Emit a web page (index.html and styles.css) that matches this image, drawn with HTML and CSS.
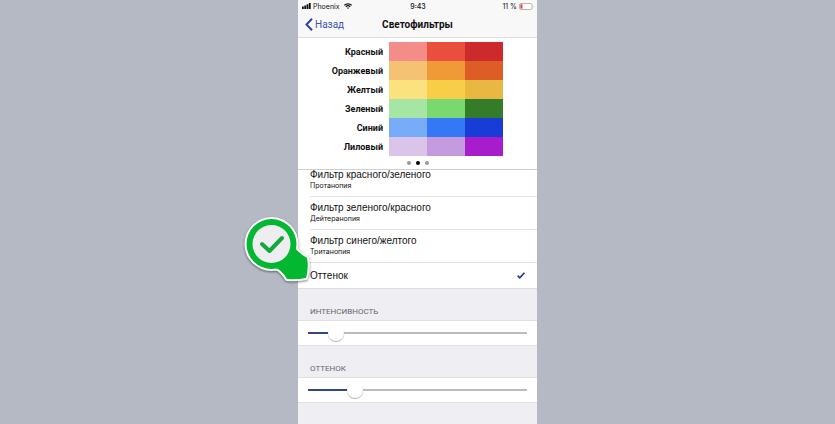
FILE: index.html
```
<!DOCTYPE html>
<html lang="ru">
<head>
    <meta charset="utf-8">
    <title>Светофильтры</title>
    <link rel="stylesheet" href="styles.css">
</head>
<body>
    <main class="phone">
        <header class="header">
            <div class="status">
                <div class="carrier">
                    <svg width="9" height="6" viewBox="0 0 9 6">
                        <path d="M0 3.500h1.800V6H0zM2.300 2.500h1.800V6H2.300zM4.600 1.200h1.800V6H4.600zM6.900 0h1.800v6H6.900z" fill="#111"/>
                    </svg>
                    <span>Phoenix</span>
                    <svg width="8" height="6" viewBox="0 0 8 6" fill="none" stroke="#111" stroke-width="1.200">
                        <path d="M.4 2.300C2.400.3 5.600.3 7.600 2.300M1.800 3.700c1.300-1.200 3.100-1.200 4.400 0"/>
                        <path d="M4 6L2.900 4.800q1.100-.8 2.200 0z" fill="#111" stroke="none"/>
                    </svg>
                </div>
                <span class="time">9:43</span>
                <div class="battery">
                    <span>11 %</span>
                    <svg width="15" height="7" viewBox="0 0 15 7">
                        <rect x=".5" y=".5" width="12.500" height="6" rx="1.500" fill="#fff" stroke="#b99a9c" stroke-width=".8"/>
                        <rect x="1.400" y="1.400" width="2" height="4.200" fill="#e0383e"/>
                        <path d="M14 2.500q1 1 0 2z" fill="#b99a9c"/>
                    </svg>
                </div>
            </div>
            <nav class="nav">
                <a class="back" href="#">
                    <svg width="8" height="13" viewBox="0 0 8 13" fill="none" stroke="#2c459f" stroke-width="2">
                        <path d="M7 .8L1.500 6.500 7 12.200"/>
                    </svg>
                    Назад
                </a>
                <h1>Светофильтры</h1>
            </nav>
        </header>

        <section class="preview">
            <table class="colors">
                <tr><th scope="row">Красный</th><td class="red-1"></td><td class="red-2"></td><td class="red-3"></td></tr>
                <tr><th scope="row">Оранжевый</th><td class="orange-1"></td><td class="orange-2"></td><td class="orange-3"></td></tr>
                <tr><th scope="row">Желтый</th><td class="yellow-1"></td><td class="yellow-2"></td><td class="yellow-3"></td></tr>
                <tr><th scope="row">Зеленый</th><td class="green-1"></td><td class="green-2"></td><td class="green-3"></td></tr>
                <tr><th scope="row">Синий</th><td class="blue-1"></td><td class="blue-2"></td><td class="blue-3"></td></tr>
                <tr><th scope="row">Лиловый</th><td class="purple-1"></td><td class="purple-2"></td><td class="purple-3"></td></tr>
            </table>
            <div class="dots">
                <button type="button" class="dot" aria-label="1"></button>
                <button type="button" class="dot active" aria-label="2"></button>
                <button type="button" class="dot" aria-label="3"></button>
            </div>
        </section>

        <form>
            <div class="filters">
                <label class="filter">
                    <input type="radio" name="filter">
                    <span class="name">Фильтр красного/зеленого</span>
                    <small>Протанопия</small>
                </label>
                <label class="filter">
                    <input type="radio" name="filter">
                    <span class="name">Фильтр зеленого/красного</span>
                    <small>Дейтеранопия</small>
                </label>
                <label class="filter">
                    <input type="radio" name="filter">
                    <span class="name">Фильтр синего/желтого</span>
                    <small>Тританопия</small>
                </label>
                <label class="filter single">
                    <input type="radio" name="filter" checked>
                    <span class="name">Оттенок</span>
                    <svg width="8" height="7" viewBox="0 0 8 7" fill="none" stroke="#25318c" stroke-width="1.600">
                        <path d="M.6 3.700L2.800 5.800 7.400.7"/>
                    </svg>
                    <!-- pin pointing at the selected filter -->
                    <svg class="pin" width="74" height="74" viewBox="0 0 74 74">
                        <g fill="#fff" stroke="#fff" stroke-width="4" stroke-linejoin="round">
                            <circle cx="29.500" cy="32" r="25"/>
                            <path d="M52 34Q54 39 65 46Q67 56 64 66Q54 68 45 67Q39 57 33 56z"/>
                        </g>
                        <g fill="#03b730">
                            <circle cx="29.500" cy="32" r="25"/>
                            <path d="M52 34Q54 39 65 46Q67 56 64 66Q54 68 45 67Q39 57 33 56z"/>
                        </g>
                        <circle cx="29.500" cy="32" r="19" fill="#eeeef1"/>
                        <path d="M20 32l7.500 7L40 26" fill="none" stroke="#12a83a" stroke-width="4" stroke-linecap="round" stroke-linejoin="round"/>
                    </svg>
                </label>
            </div>

            <label class="caption" for="intensity">ИНТЕНСИВНОСТЬ</label>
            <div class="slider">
                <input type="range" id="intensity" min="0" max="100" value="10" style="--fill: 10%">
            </div>

            <label class="caption" for="hue">ОТТЕНОК</label>
            <div class="slider">
                <input type="range" id="hue" min="0" max="100" value="19" style="--fill: 19%">
            </div>
        </form>
    </main>
</body>
</html>
```
FILE: styles.css
```
* {
    box-sizing: border-box;
}

body {
    margin: 0;
    background-color: #b5b9c4;
    font-family: Roboto, "Liberation Sans", sans-serif;
    color: #111;
}

.phone {
    width: 100%;
    max-width: 239px;
    min-height: 100vh;
    margin: 0 auto;
    background-color: #eeeef3;
}

.header {
    background-color: #f8f8f9;
    border-bottom: 1px solid #dedee0;
}

.status {
    display: grid;
    grid-template-columns: 1fr auto 1fr;
    align-items: center;
    height: 12px;
    padding: 0 3px 0 4px;
    font-family: Inter, sans-serif;
    font-size: 7px;
}

.carrier,
.battery {
    display: flex;
    align-items: center;
    gap: 2px;
}

.carrier svg:last-child {
    margin-left: 2px;
}

.battery {
    justify-content: flex-end;
}

.time {
    font-weight: 500;
}

.nav {
    display: grid;
    grid-template-columns: 1fr auto 1fr;
    align-items: center;
    height: 25px;
    padding: 0 7px;
}

.back {
    display: flex;
    align-items: center;
    gap: 2px;
    font-size: 10px;
    color: #3a56ad;
    text-decoration: none;
}

h1 {
    margin: 0;
    font-size: 10px;
    font-weight: 700;
}

.preview {
    position: relative;
    z-index: 1;
    padding-top: 4px;
    background-color: #fff;
    border-bottom: 1px solid #cfcfd2;
}

.colors {
    margin-left: 28px;
    border-collapse: collapse;
}

.colors th {
    width: 63px;
    height: 19px;
    padding: 0 6px 0 0;
    font-size: 9px;
    font-weight: 700;
    line-height: 12px;
    text-align: right;
}

.colors td {
    width: 38px;
    padding: 0;
}

.red-1 { background-color: #f48d87; }
.red-2 { background-color: #ea4f3d; }
.red-3 { background-color: #cd2b2b; }
.orange-1 { background-color: #f5c172; }
.orange-2 { background-color: #f09a37; }
.orange-3 { background-color: #de5d27; }
.yellow-1 { background-color: #fbe27e; }
.yellow-2 { background-color: #f8ce49; }
.yellow-3 { background-color: #e8b842; }
.green-1 { background-color: #a6e6a5; }
.green-2 { background-color: #79d86f; }
.green-3 { background-color: #347c29; }
.blue-1 { background-color: #78abf8; }
.blue-2 { background-color: #3478f6; }
.blue-3 { background-color: #173dd6; }
.purple-1 { background-color: #dac4ea; }
.purple-2 { background-color: #c59be0; }
.purple-3 { background-color: #a81dcb; }

.dots {
    display: flex;
    justify-content: center;
    align-items: center;
    gap: 5px;
    height: 13px;
}

.dot {
    width: 4px;
    height: 4px;
    padding: 0;
    border: none;
    border-radius: 50%;
    background-color: #999;
    cursor: pointer;
}

.dot.active {
    background-color: #000;
}

/* the list is scrolled a little under the preview */
.filters {
    margin-top: -6px;
    background-color: #fff;
    border-bottom: 1px solid #dcdce0;
}

.filter {
    display: flex;
    flex-direction: column;
    position: relative;
    height: 33px;
    padding-top: 5px;
    cursor: pointer;
}

.filter::after {
    content: "";
    height: 1px;
    margin: auto 0 0 12px;
    background-color: #e2e2e5;
}

.filter input {
    position: absolute;
    opacity: 0;
    margin: 0;
}

.name {
    padding-left: 12px;
    font-family: "Liberation Sans", Arial, sans-serif;
    font-size: 10px;
    line-height: 12px;
}

.filter small {
    padding-left: 12px;
    font-family: Inter, sans-serif;
    font-size: 7px;
    line-height: 10px;
}

.filter.single {
    flex-direction: row;
    align-items: center;
    justify-content: space-between;
    height: 25px;
    padding: 0 12px 0 0;
}

.filter.single::after {
    display: none;
}

.pin {
    position: absolute;
    left: -56px;
    top: -51px;
    filter: drop-shadow(0 1px 1px rgba(0, 0, 0, 0.5));
}

.caption {
    display: block;
    padding: 17px 12px 3px;
    font-size: 8px;
    line-height: 11px;
    color: #66666b;
}

.slider {
    display: flex;
    align-items: center;
    height: 26px;
    padding: 0 10px;
    background-color: #fff;
    border-top: 1px solid #e0e0e4;
    border-bottom: 1px solid #e0e0e4;
}

.slider input {
    appearance: none;
    width: 100%;
    height: 16px;
    margin: 0;
    background: none;
    cursor: pointer;
}

.slider input::-webkit-slider-runnable-track {
    height: 2px;
    background: linear-gradient(to right, #35458c var(--fill), #bcbcbe var(--fill));
}

.slider input::-webkit-slider-thumb {
    appearance: none;
    width: 16px;
    height: 16px;
    margin-top: -7px;
    border-radius: 50%;
    background-color: #fff;
    box-shadow: 0 1px 1px rgba(0, 0, 0, 0.3);
}
```
